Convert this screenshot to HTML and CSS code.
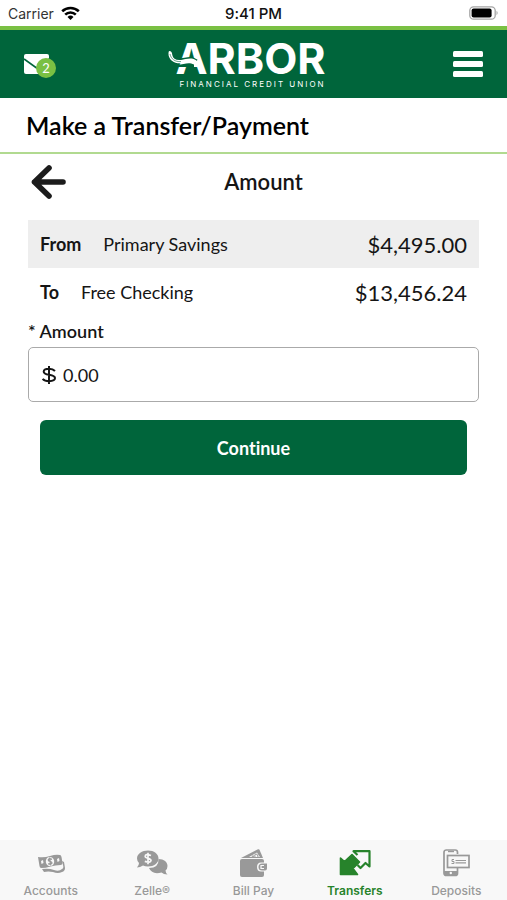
FILE: index.html
```html
<!DOCTYPE html>
<html lang="en">
<head>
<meta charset="utf-8">
<meta name="viewport" content="width=device-width, initial-scale=1">
<title>Make a Transfer/Payment</title>
<link rel="stylesheet" href="styles.css">
</head>
<body>
<div class="status">
  <div class="status-left">
    <span>Carrier</span>
    <svg width="19" height="14" viewBox="0 0 19 14" aria-hidden="true"><g fill="none" stroke="#000" stroke-width="2.6"><path d="M1.2 5.3a12 12 0 0 1 16.6 0"/><path d="M4.2 8.6a7.6 7.6 0 0 1 10.6 0"/></g><path d="M9.500 14 6.500 11a4.300 4.300 0 0 1 6 0z"/></svg>
  </div>
  <span class="status-time">9:41 PM</span>
  <div class="status-right">
    <svg width="30" height="14" viewBox="0 0 30 14" aria-hidden="true"><rect x=".8" y=".8" width="25.400" height="12.400" rx="3.800" fill="#fff" stroke="#a5a5a5" stroke-width="1.300"/><rect x="2.600" y="2.600" width="20" height="8.800" rx="2"/><path d="M27.500 4.800q2.300 2.200 0 4.400z" fill="#a5a5a5"/></svg>
  </div>
</div>
<header class="topbar">
  <button class="mail" type="button" aria-label="Messages">
    <svg width="25" height="20" viewBox="0 0 25 20" aria-hidden="true"><rect width="25" height="20" rx="2" fill="#fff"/><path d="M0 5 12.500 14 25 5" fill="none" stroke="#00653b" stroke-width="1.800"/></svg>
    <span class="badge">2</span>
  </button>
  <div class="logo">
    <div class="logo-name">
      <svg class="swoosh" width="38" height="22" viewBox="0 0 38 22" aria-hidden="true"><path d="M9 9.500C17 10 22 5.500 29 10.500" fill="none" stroke="#00653b" stroke-width="2"/><path d="M9 14.500C17 14.500 20 11.500 26 14.500V17H9z" fill="#00653b"/><path d="M1 1C3.500 1 4 2.500 4.300 5C5 9 8 10.500 13 10C19 9 24 7 29 11L36 21C30 20 29 13 23 12C18 11.500 15 14 9.500 13.200C3 12.500-1 6 1 1z" fill="#fff"/><path d="M2 4C3 9 7 12 13 11.600" fill="none" stroke="#00653b" stroke-width=".6"/></svg>
      <span>ARBOR</span>
    </div>
    <div class="logo-tag">FINANCIAL CREDIT UNION</div>
  </div>
  <button class="menu" type="button" aria-label="Menu">
    <svg width="30" height="26" viewBox="0 0 30 26" aria-hidden="true"><g fill="#fff"><rect width="30" height="6" rx="1.500"/><rect y="10" width="30" height="6" rx="1.500"/><rect y="20" width="30" height="6" rx="1.500"/></g></svg>
  </button>
</header>
<h1 class="title">Make a Transfer/Payment</h1>
<main class="content">
  <div class="step">
    <button class="back" type="button" aria-label="Back">
      <svg width="36" height="36" viewBox="0 0 36 36" aria-hidden="true"><path d="M19 4 4.500 18 19 32M4.500 18H33" fill="none" stroke="#1c1c1c" stroke-width="5.600" stroke-linecap="round" stroke-linejoin="round"/></svg>
    </button>
    <h2>Amount</h2>
  </div>
  <form class="form">
    <div class="row row-shaded"><strong>From</strong><span class="account">Primary Savings</span><span class="balance">$4,495.00</span></div>
    <div class="row"><strong>To</strong><span class="account">Free Checking</span><span class="balance">$13,456.24</span></div>
    <label class="label" for="amount"><span>*</span> Amount</label>
    <div class="field">
      <svg width="16" height="20" viewBox="0 0 16 20" aria-hidden="true"><path d="M14 6C12.500 4.400 10.500 3.800 8 3.800C4.800 3.800 2.700 4.900 2.700 6.700C2.700 11 14 8.600 14 13.100C14 15 11.500 16.200 8 16.200C5.300 16.200 3 15.400 1.600 13.800M8 1V19" fill="none" stroke="#151515" stroke-width="2"/></svg>
      <input id="amount" type="text" inputmode="decimal" value="0.00">
    </div>
    <button class="continue" type="button">Continue</button>
  </form>
</main>
<nav class="tabs">
  <a href="#accounts">
    <svg width="30" height="30" viewBox="0 0 30 30" aria-hidden="true"><path d="M6 21q7-1 12 1t8-1q2-1 1-4l-1-4 2 1 1 6q0 3-3 4-4 2-9 0-5-1-9 0z" fill="#999"/><path d="M2 9q6 1 12-1t10-1q1 0 1.500 2l1 6q0 2-2 2-5 0-10 1.500t-9 1.500q-2 0-2-2z" fill="#999"/><ellipse cx="14" cy="13.500" rx="4.200" ry="4.600" fill="#f8f8f8" transform="rotate(-10 14 13.500)"/><path d="M16 11.400q-3-1.500-3.700.4c-.5 2 3.700 1.300 3.700 3.200q-1 2-3.800.6M13.600 9.500l1 8" fill="none" stroke="#999" stroke-width="1.300"/><path d="m5 13 2-1 .5 3-2 1zM21 11l2-1 .5 3-2 1z" fill="#f8f8f8"/></svg>
    <span>Accounts</span>
  </a>
  <a href="#zelle">
    <svg width="32" height="30" viewBox="0 0 32 30" aria-hidden="true"><path d="M22.500 11C28 11 31.500 14 31.500 18q0 3-2 4.500 0 2 2 4-4 0-6-2Q16 27 13 20q10 0 9.500-9z" fill="#999"/><path d="M12 2.500C18 2.500 22.500 6 22.500 10.500S18 18.500 12 18.500q-3 0-5-1-3 2-6 2 2-2 2-4.500-2-2-2-4.500C1 6 6 2.500 12 2.500z" fill="#999"/><path d="M15 7.500Q9.300 5.300 9.200 8.300C9.200 11 15 9.700 15 12.600Q14.500 15.300 8.800 13.400M12 4.800V16.200" fill="none" stroke="#f8f8f8" stroke-width="1.700"/></svg>
    <span>Zelle®</span>
  </a>
  <a href="#billpay">
    <svg width="30" height="30" viewBox="0 0 30 30" aria-hidden="true"><path d="M3 10 20 1.300q1-.5 1.500.5L25 10z" fill="#999"/><path d="m11 9 8-4.500q1 2 3 4.500z" fill="#f8f8f8"/><path d="M14 9q1-3 2 0m1 0q-1-3 1-3t2 3" fill="none" stroke="#999"/><path d="M4 11H24q2 0 2 2V27q0 2-2 2H4q-2 0-2-2V13q0-2 2-2z" fill="#999"/><path d="M28 14.500h-5q-4 0-4 4.500t4 4.500h5z" fill="#f8f8f8"/><path d="M29 15.500h-5q-3.500 0-3.500 3.500t3.500 3.500h3q2 0 2-2z" fill="#999"/><path d="M26 17.500h-3v3h3" fill="none" stroke="#f8f8f8" stroke-width="1.200"/></svg>
    <span>Bill Pay</span>
  </a>
  <a class="active" href="#transfers" aria-current="page">
    <svg width="32" height="30" viewBox="0 0 32 30" aria-hidden="true"><path d="M18.500 7 14.500 3.200H30.500V18.500L26.500 15 21.500 20 18.500 17" fill="none" stroke="#27832b" stroke-width="2.200" stroke-linejoin="round"/><path d="M1.500 10 5.500 13.500 13 6.500 20.500 14 14 20.500 18.500 26.500H1.500z" fill="#27832b" stroke="#27832b" stroke-width="1.600" stroke-linejoin="round"/></svg>
    <span>Transfers</span>
  </a>
  <a href="#deposits">
    <svg width="30" height="30" viewBox="0 0 30 30" aria-hidden="true"><rect x="3" y="2" width="13.500" height="25.500" rx="2.300" fill="#f8f8f8" stroke="#999" stroke-width="1.700"/><path d="M3 23H16.500v3q0 1.500-1.500 1.500H4.500Q3 27.500 3 26z" fill="#999"/><circle cx="9.800" cy="25" r="1.200" fill="#f8f8f8"/><path d="M7 3.500h6" stroke="#999" stroke-width="1.400"/><rect x="5" y="6" width="24" height="14" fill="#f8f8f8"/><rect x="6.500" y="7.500" width="21.500" height="12" fill="#f8f8f8" stroke="#999" stroke-width="1.700"/><path d="M13 11.500h-2v2h2v2h-2.500" fill="none" stroke="#999"/><path d="M14.500 12.500H25M14.500 14.800H25" stroke="#999" stroke-width="1.200"/></svg>
    <span>Deposits</span>
  </a>
</nav>
</body>
</html>
```

FILE: styles.css
```css
* {
  box-sizing: border-box;
}

body {
  margin: 0;
  min-height: 100vh;
  display: flex;
  flex-direction: column;
  background: #fff;
  color: #151515;
  font-family: Lato, sans-serif;
  font-variant-ligatures: none;
}

button {
  padding: 0;
  border: 0;
  background: none;
  font-family: inherit;
  font-variant-ligatures: none;
  cursor: pointer;
}

svg {
  display: block;
  flex: none;
}

h1,
h2 {
  margin: 0;
}

.status {
  display: grid;
  grid-template-columns: 1fr auto 1fr;
  align-items: center;
  height: 30px;
  padding: 0 8px;
  border-bottom: 4px solid #7ac043;
  font-family: Inter, sans-serif;
  font-size: 14px;
  color: #333;
}

.status-left {
  display: flex;
  align-items: center;
  gap: 7px;
}

.status-time {
  font-size: 15px;
  font-weight: 500;
  color: #111;
}

.status-right {
  justify-self: end;
}

.topbar {
  display: grid;
  grid-template-columns: 1fr auto 1fr;
  align-items: center;
  height: 68px;
  padding: 0 24px;
  background: #00653b;
  color: #fff;
}

.mail {
  position: relative;
  justify-self: start;
}

.badge {
  position: absolute;
  top: 4px;
  left: 12px;
  width: 20px;
  border-radius: 50%;
  background: #7ac043;
  color: #fff;
  font-size: 13px;
  line-height: 20px;
}

.logo {
  display: flex;
  flex-direction: column;
  align-items: flex-end;
  gap: 4px;
  margin-right: 6px;
}

.logo-name {
  position: relative;
  font-family: Inter, sans-serif;
  font-size: 43px;
  font-weight: 700;
  line-height: 36px;
}

.swoosh {
  position: absolute;
  left: -7px;
  top: 10px;
}

.logo-tag {
  font-family: Inter, sans-serif;
  font-size: 8px;
  letter-spacing: 2px;
  line-height: 8px;
}

.menu {
  justify-self: end;
}

.title {
  padding: 0 26px;
  border-bottom: 2px solid #b1da90;
  font-size: 25px;
  font-weight: 600;
  line-height: 54px;
  color: #000;
}

.content {
  flex: 1;
  padding: 0 28px;
}

.step {
  display: grid;
  grid-template-columns: 40px 1fr 20px;
  align-items: center;
  justify-items: center;
  height: 56px;
  margin-bottom: 10px;
}

.step h2 {
  font-size: 22px;
  font-weight: 600;
  line-height: 26px;
}

.form {
  display: flex;
  flex-direction: column;
}

.row {
  display: flex;
  align-items: center;
  height: 48px;
  padding: 0 12px;
  font-size: 18px;
}

.row strong {
  font-weight: 700;
}

.row-shaded {
  background: #eee;
}

.account {
  margin-left: 22px;
}

.balance {
  margin-left: auto;
  font-size: 22px;
}

.label {
  font-size: 18px;
  font-weight: 600;
  line-height: 31px;
}

.field {
  display: flex;
  align-items: center;
  gap: 6px;
  height: 55px;
  padding: 0 12px;
  border: 1px solid #aaa;
  border-radius: 5px;
}

.field input {
  flex: 1;
  min-width: 0;
  padding: 0;
  border: 0;
  outline: 0;
  background: none;
  color: inherit;
  font-family: inherit;
  font-size: 18px;
}

.continue {
  height: 55px;
  margin: 18px 12px;
  border-radius: 6px;
  background: #00653b;
  color: #fff;
  font-size: 18px;
  font-weight: 700;
}

.tabs {
  display: grid;
  grid-template-columns: repeat(5, 1fr);
  height: 60px;
  padding-top: 8px;
  background: #f8f8f8;
}

.tabs a {
  display: flex;
  flex-direction: column;
  align-items: center;
  gap: 4px;
  color: #999;
  font-family: Inter, sans-serif;
  font-size: 12px;
  font-weight: 500;
  line-height: 18px;
  text-decoration: none;
}

.tabs .active {
  color: #27832b;
  font-weight: 600;
}
```
